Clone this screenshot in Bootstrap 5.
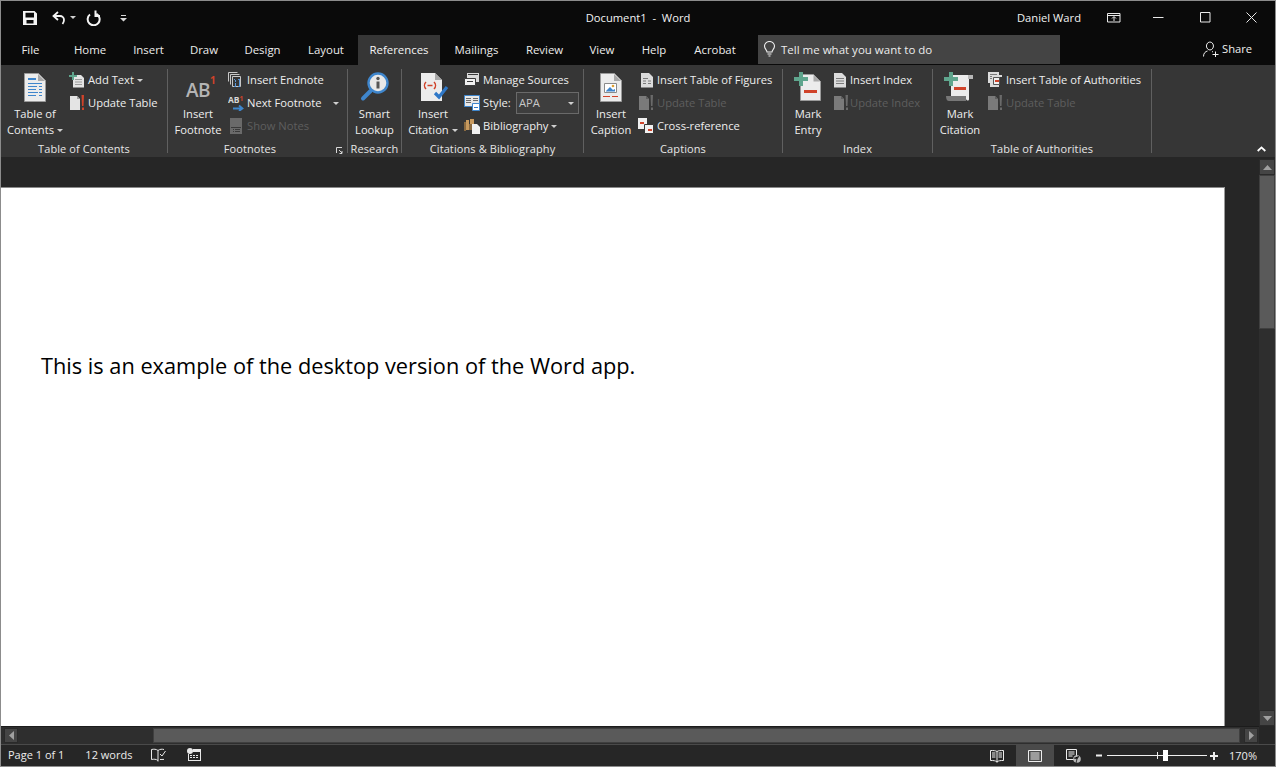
<!DOCTYPE html>
<html lang="en">
<head>
<meta charset="utf-8">
<title>Document1 - Word</title>
<link href="https://cdn.jsdelivr.net/npm/bootstrap@5.3.0/dist/css/bootstrap.min.css" rel="stylesheet">
<style>
html,body{height:100%;margin:0;background:#262626;overflow:hidden}
body{font-family:"Open Sans","Noto Sans",sans-serif;font-size:11.2px;line-height:16px;color:#f0f0f0}
svg{display:block;flex:none}
.win{width:1276px;height:767px;border:1px solid #8c8c8c}
.titlebar{height:34px;background:#0a0a0a;color:#f2f2f2}
.tb-side{flex:1 1 0}
.m-save{margin-left:21px}.m-undo{margin-left:13px}.m-caret{margin-left:5px;vertical-align:0}.m-redo{margin-left:10px}.m-cust{margin-left:18px}
.m-disp{margin-left:26px}.m-min{margin-left:32px}.m-max{margin-left:36px}.m-close{margin-left:35px;margin-right:18px}
.tabs{height:30px;background:#0a0a0a}
.tab{height:30px;text-align:center;line-height:29px;color:#ececec;font-size:11.4px}
.tab.active{background:#363636;color:#f4f4f4}
.t-file{width:59px}.t-home{width:60px}.t-insert{width:57px}.t-draw{width:54px}.t-design{width:63px}.t-layout{width:64px}.t-ref{width:82px}.t-mail{width:73px}.t-review{width:63px}.t-view{width:52px}.t-help{width:52px}.t-acro{width:70px}
.search{width:302px;height:29px;margin-left:8px;background:#444;color:#ececec;padding-left:5px;gap:5px;font-size:11.5px}
.search span{padding-top:1px}
.share{margin-left:143px;gap:3px;height:29px}
.ribbon{height:93px;background:#363636;padding-top:4px;position:relative}
.rg{height:84px;border-right:1px solid #606060;display:flex;flex-direction:column}
.rg-1{width:167px}.rg-2{width:180px}.rg-3{width:54px}.rg-4{width:182px}.rg-5{width:199px}.rg-6{width:150px}.rg-7{width:219px}
.rb{height:73px;flex:none;display:flex}
.rl{height:14px;text-align:center;font-size:11px;line-height:14px;color:#e6e6e6;position:relative;letter-spacing:.1px}
.rl-foot{padding-right:15px}
.launch{position:absolute;right:4px;top:5px}
.big{display:flex;flex-direction:column;align-items:center;text-align:center;line-height:16px;white-space:nowrap;color:#eee}
.big .ic{height:33px;display:flex;align-items:flex-end}
.big .tx{margin-top:4px}
.sm{display:flex;flex-direction:column}
.si{height:23px;display:flex;align-items:center;white-space:nowrap;color:#eee}
.si .lb{margin-left:3px}
.si .lb-add{margin-left:2px}
.si .lb-1{margin-left:1px}
.ml-2px{margin-left:2px}
.off{color:#5e5e5e}
.si.off{color:#5e5e5e}
.caret-d{display:inline-block;width:0;height:0;border-left:3px solid transparent;border-right:3px solid transparent;border-top:3px solid #d0d0d0;vertical-align:2px;margin-left:3px}
.caret-far{margin-left:11px}
.combo{width:63px;height:22px;border:1px solid #6a6a6a;background:#3e3e3e;color:#c8c8c8;padding-left:2px;padding-right:4px;display:flex;align-items:center;justify-content:space-between}
.lb-style{width:33px}
.collapse-btn{position:absolute;right:9px;bottom:5px}
.bw-68{width:68px}.bw-60{width:60px}.bw-53{width:53px}.bw-62{width:62px}.bw-54{width:54px}.bw-50{width:50px}
.main{height:569px}
.left{width:1258px}
.band{height:30px;background:#262626}
.page{width:1223px;height:539px;background:#fff;border-top:1px solid #8a8a8a;color:#000;font-family:"Open Sans",sans-serif;font-size:21.75px;line-height:28px;padding:164px 0 0 40px;box-shadow:1px 0 0 #9a9a9a}
.vbar{width:16px;margin-top:2px;background:#2e2e2e}
.sbtn{background:#454545;border:1px solid #2a2a2a;display:flex;align-items:center;justify-content:center}
.vbar .sbtn{height:16px}
.vth{height:154px;background:#5a5a5a;border:1px solid #3f3f3f}
.vgap{flex:1}
.hbar{height:18px;background:#2e2e2e;width:1258px;border-top:1px solid #1c1c1c;padding:1px 0 1px 3px}
.hbar .sbtn{width:14px}
.hgap{width:135px}
.hth{width:1087px;background:#5a5a5a;border:1px solid #3f3f3f}
.status{height:22px;background:#262626;border-top:1px solid #4a4a4a;color:#ececec;font-size:11px;line-height:18px}
.s-page{margin-left:7px;padding-bottom:1px}.s-words{margin-left:21px;padding-bottom:2px}.s-i1{margin-left:19px;margin-bottom:1px}.s-i2{margin-left:21px;margin-bottom:1px}
.rv{width:38px;height:21px;display:flex;align-items:center;justify-content:center}
.rv.on{background:#4a4a4a}
.z-minus{margin-left:4px}
.zoomtrack{width:100px;height:1px;background:#f0f0f0;position:relative;margin:0 3px 0 4px}
.zoomtrack i{position:absolute;left:50px;top:-3px;width:1px;height:7px;background:#f0f0f0}
.zoomtrack b{position:absolute;left:56px;top:-5px;width:5px;height:11px;background:#fff}
.z-pct{margin:0 18px 0 11px}
.defs{position:absolute;width:0;height:0}
</style>
</head>
<body>
<div class="win d-flex flex-column">
  <div class="titlebar d-flex align-items-center">
    <div class="tb-side d-flex align-items-center">
      <svg class="m-save" width="16" height="16" viewBox="0 0 16 16"><path fill="#f4f4f4" fill-rule="evenodd" d="M1 1h11.500L15 3.500V15H1zM3.500 2.800v4.700H12V2.800zM4.500 10v3.500h7V10z"/></svg>
      <svg class="m-undo" width="16" height="16" viewBox="0 0 16 16"><path fill="none" stroke="#f4f4f4" stroke-width="1.800" d="M7 2 2.500 6 7 10M3 6h6a4 4 0 0 1 4 4c0 1.700-.7 3-1.500 4"/></svg>
      <span class="caret-d m-caret"></span>
      <svg class="m-redo" width="16" height="16" viewBox="0 0 16 16"><path fill="none" stroke="#f4f4f4" stroke-width="2" d="M10.500 4a6 6 0 1 1-6.500.5M9.500 .5V6H14"/></svg>
      <svg class="m-cust" width="7" height="8" viewBox="0 0 7 8"><path fill="#d8d8d8" d="M1 1h5v1H1zM0 4h7L3.500 7.500z"/></svg>
    </div>
    <div class="text-center">Document1 &nbsp;-&nbsp; Word</div>
    <div class="tb-side d-flex align-items-center justify-content-end">
      <span>Daniel Ward</span>
      <svg class="m-disp" width="14" height="10" viewBox="0 0 14 10"><path fill="none" stroke="#e8e8e8" d="M.5.500h12.500v8.500H.5zM.5 2.500h12.500M7 8V4M5 5.500l2-2 2 2"/></svg>
      <svg class="m-min" width="11" height="11" viewBox="0 0 11 11"><path stroke="#e8e8e8" d="M0 5.500h10.500"/></svg>
      <svg class="m-max" width="11" height="11" viewBox="0 0 11 11"><path fill="none" stroke="#e8e8e8" d="M.5.500h9.500v9.500H.5z"/></svg>
      <svg class="m-close" width="11" height="11" viewBox="0 0 11 11"><path stroke="#e8e8e8" d="M.5.500l10 10M10.500.500l-10 10"/></svg>
    </div>
  </div>
  <nav class="tabs d-flex align-items-start">
    <div class="tab t-file">File</div>
    <div class="tab t-home">Home</div>
    <div class="tab t-insert">Insert</div>
    <div class="tab t-draw">Draw</div>
    <div class="tab t-design">Design</div>
    <div class="tab t-layout">Layout</div>
    <div class="tab t-ref active">References</div>
    <div class="tab t-mail">Mailings</div>
    <div class="tab t-review">Review</div>
    <div class="tab t-view">View</div>
    <div class="tab t-help">Help</div>
    <div class="tab t-acro">Acrobat</div>
    <div class="search d-flex align-items-center">
      <svg width="13" height="16" viewBox="0 0 13 16"><path fill="none" stroke="#eee" stroke-width="1.100" d="M4 11c0-2-2.500-3-2.500-6a5 4.500 0 0 1 10 0c0 3-2.500 4-2.500 6zM4.500 13h4M5.500 15h2"/></svg>
      <span>Tell me what you want to do</span>
    </div>
    <div class="share d-flex align-items-center">
      <svg width="16" height="16" viewBox="0 0 16 16"><path fill="none" stroke="#eee" d="M7 1a3.500 4 0 1 1-.1 0M.5 15.500c0-3.500 2-5 4-5.500M9 10.500l1 .5M9.500 13.500h6M12.500 10.500v5.500"/></svg>
      <span>Share</span>
    </div>
  </nav>
  <div class="ribbon d-flex">
    <section class="rg rg-1">
      <div class="rb">
        <div class="big bw-68">
          <div class="ic"><svg width="22" height="29" viewBox="0 0 22 29"><path fill="#ececec" stroke="#9a9a9a" d="M.5.500h14l7 7v21H.5z"/><path fill="#a8a8a8" d="M14 1l7 7h-7z"/><path fill="#3f86cc" d="M4 5h8v2H4zM4 10h14v1H4zM4 13h9v1H4zM15 13h3v1h-3zM4 16h8v1H4zM15 16h3v1h-3zM4 19h10v1H4zM15 19h3v1h-3zM4 22h8v1H4zM15 22h3v1h-3z"/></svg></div>
          <div class="tx">Table of<br>Contents<span class="caret-d"></span></div>
        </div>
        <div class="sm">
          <div class="si"><svg width="17" height="16" viewBox="0 0 17 16"><path fill="#e4e4e4" d="M4 3h8l3 3v9.500H4z"/><path fill="#9a9a9a" d="M6 7h7v1H6zM6 9.500h7v1H6zM6 12h7v1H6z"/><path fill="#5fa58d" d="M3 0h2v3h3v2H5v3H3V5H0V3h3z"/></svg><span class="lb lb-add">Add Text<span class="caret-d"></span></span></div>
          <div class="si"><svg width="16" height="16" viewBox="0 0 16 16"><use href="#pg"/><path fill="#d0432a" d="M12.500 0h2.500l-.5 11h-1.500zM13 12.500h2V15h-2z"/></svg><span class="lb">Update Table</span></div>
        </div>
      </div>
      <div class="rl">Table of Contents</div>
    </section>
    <section class="rg rg-2">
      <div class="rb">
        <div class="big bw-60">
          <div class="ic"><svg width="38" height="28" viewBox="0 0 38 28"><text x="7" y="23" font-family="Open Sans,sans-serif" font-size="19" font-weight="600" letter-spacing="-.5" fill="#b4b4b4">AB<tspan dy="-13" font-size="10" font-weight="700" fill="#d0432a">1</tspan></text></svg></div>
          <div class="tx">Insert<br>Footnote</div>
        </div>
        <div class="sm">
          <div class="si"><svg width="16" height="16" viewBox="0 0 16 16"><path fill="none" stroke="#c8c8c8" d="M.5.500h9M.5.500v9M2.500 2.500h9M2.500 2.500v10M4.500 4.500h8v10h-8z"/><path fill="#5a98d8" d="M7 8h1v2H7zM7 11h1v3H7zM10 7h1v1h-1zM11 7h1v8h-2v-1h1zM6 7h1v1H6zM6 14h2v1H6z"/></svg><span class="lb">Insert Endnote</span></div>
          <div class="si"><svg width="16" height="16" viewBox="0 0 16 16"><text x="0" y="8" font-family="Open Sans,sans-serif" font-size="8.500" font-weight="700" fill="#d8d8d8">AB<tspan dy="-2" font-size="6.500" fill="#d0432a">1</tspan></text><path fill="none" stroke="#3f86cc" stroke-width="1.800" d="M5 13.500h9M11 10.500l3.500 3-3.500 2.500"/></svg><span class="lb">Next Footnote</span><span class="caret-d caret-far"></span></div>
          <div class="si off"><svg width="16" height="16" viewBox="0 0 16 16"><path fill="#6a6a6a" d="M2 0h12v16H2z"/><path fill="#3a3a3a" d="M3 9h10v1H3zM5 11h1v1H5zM7 11h5v1H7zM5 13h1v1H5zM7 13h5v1H7z"/></svg><span class="lb">Show Notes</span></div>
        </div>
      </div>
      <div class="rl"><div class="rl-foot">Footnotes</div>
        <svg class="launch" width="7" height="7" viewBox="0 0 7 7"><path fill="none" stroke="#d8d8d8" d="M.5 6V.5H6M3 3l3 3M6 4v2.500H3.500"/></svg>
      </div>
    </section>
    <section class="rg rg-3">
      <div class="rb">
        <div class="big bw-53">
          <div class="ic"><svg width="30" height="30" viewBox="0 0 30 30"><circle cx="18" cy="11" r="9.500" fill="#e8e8e8" stroke="#3f86cc" stroke-width="2.400"/><path fill="#555" d="M16.500 9.500h3v7h-3z"/><circle cx="18" cy="6.500" r="1.700" fill="#555"/><path stroke="#3f86cc" stroke-width="4" stroke-linecap="round" d="M10.500 19 3 26.500"/></svg></div>
          <div class="tx">Smart<br>Lookup</div>
        </div>
      </div>
      <div class="rl">Research</div>
    </section>
    <section class="rg rg-4">
      <div class="rb">
        <div class="big bw-62">
          <div class="ic"><svg width="32" height="30" viewBox="0 0 32 30"><path fill="#ececec" d="M4 1h14l7 7v21H4z"/><path fill="#a8a8a8" d="M18 1l7 7h-7z"/><path fill="none" stroke="#d0432a" stroke-width="1.500" d="M9 10c-2 2-2 5 0 7M17 10c2 2 2 5 0 7M10.500 13.500h5"/><path fill="none" stroke="#2f78c8" stroke-width="3.200" d="M18 21l4 4 8-10"/></svg></div>
          <div class="tx">Insert<br>Citation<span class="caret-d"></span></div>
        </div>
        <div class="sm">
          <div class="si"><svg width="16" height="16" viewBox="0 0 16 16"><path fill="#d8d8d8" d="M3 1h12v9H3z"/><path fill="#3a3a3a" d="M4 2h10v1H4zM2 3h1v2H2z"/><path fill="#f0f0f0" stroke="#3a3a3a" d="M.5 6.500h11v7H.5z"/><path fill="#3a3a3a" d="M3 9h6v1H3z"/></svg><span class="lb">Manage Sources</span></div>
          <div class="si"><svg width="16" height="16" viewBox="0 0 16 16"><path fill="#e8e8e8" stroke="#3f86cc" d="M.5.500h15v11H.5z"/><path fill="#6a6a6a" d="M2 3h5v1H2zM2 5h5v1H2zM2 7h5v1H2zM9 3h5v1H9zM9 5h5v1H9z"/><path fill="#fff" stroke="#3f86cc" d="M8.500 8.500h7v7h-7z"/><path fill="#2f78c8" d="M10 12h4v1h-4z"/></svg><span class="lb lb-style">Style:</span>
            <div class="combo"><span>APA</span><span class="caret-d"></span></div>
          </div>
          <div class="si"><svg width="16" height="16" viewBox="0 0 16 16"><path fill="#c89a5e" d="M2 2h3v10H2zM6 1h4v5H6z"/><path fill="#8a6a40" d="M0 4h2v9H0zM5 6h3v6H5z"/><path fill="#f0f0f0" d="M8 6h5l3 3v7H8z"/></svg><span class="lb">Bibliography<span class="caret-d"></span></span></div>
        </div>
      </div>
      <div class="rl">Citations &amp; Bibliography</div>
    </section>
    <section class="rg rg-5">
      <div class="rb">
        <div class="big bw-54">
          <div class="ic"><svg width="22" height="29" viewBox="0 0 22 29"><path fill="#ececec" stroke="#9a9a9a" d="M.5.500h14l7 7v21H.5z"/><path fill="#a8a8a8" d="M14 1l7 7h-7z"/><path fill="#fff" stroke="#8a8a8a" d="M4.500 10.500h12v9h-12z"/><path fill="#3f86cc" d="M6 18l4-4 3 3 2-1v2.500H6z"/><circle cx="13" cy="13" r="1.300" fill="#e0a030"/><path fill="#d0432a" d="M3 23h7v1H3zM12 23h6v1h-6z"/></svg></div>
          <div class="tx">Insert<br>Caption</div>
        </div>
        <div class="sm">
          <div class="si"><svg class="ml-2px" width="14" height="16" viewBox="0 0 14 16"><path fill="#dcdcdc" d="M1 1h8l4 4v10.500H1z"/><path fill="#7a7a7a" d="M3 6h5v1H3zM3 8.500h3v1H3zM8 8.500h3v1H8zM3 11h3v1H3zM8 11h3v1H8z"/></svg><span class="lb">Insert Table of Figures</span></div>
          <div class="si off"><svg width="16" height="16" viewBox="0 0 16 16"><use href="#pgoff"/><path fill="#6a6a6a" d="M12.500 0h2.500l-.5 11h-1.500zM13 12.500h2V15h-2z"/></svg><span class="lb">Update Table</span></div>
          <div class="si"><svg width="16" height="16" viewBox="0 0 16 16"><path fill="#f0f0f0" d="M0 0h9v11H0z"/><path fill="#d0432a" d="M2 4h4v2H2z"/><path fill="#f0f0f0" stroke="#363636" d="M6.500 6.500h9v9h-9z"/><path fill="#d0432a" d="M10 11h4v2h-4z"/></svg><span class="lb">Cross-reference</span></div>
        </div>
      </div>
      <div class="rl">Captions</div>
    </section>
    <section class="rg rg-6">
      <div class="rb">
        <div class="big bw-50">
          <div class="ic"><svg width="28" height="30" viewBox="0 0 28 30"><path fill="#ececec" stroke="#9a9a9a" d="M6.500 2.500h13l7 7v19h-20z"/><path fill="#a8a8a8" d="M19.500 3l6.500 6.500h-6.500z"/><path fill="#5fa58d" d="M5 0h4v5h5v4H9v5H5V9H0V5h5z"/><path fill="#d0432a" d="M10 18h13v3H10z"/></svg></div>
          <div class="tx">Mark<br>Entry</div>
        </div>
        <div class="sm">
          <div class="si"><svg width="14" height="16" viewBox="0 0 14 16"><path fill="#dcdcdc" d="M1 1h8l4 4v10.500H1z"/><path fill="#7a7a7a" d="M3 6h8v1H3zM3 8.500h8v1H3zM3 11h8v1H3z"/></svg><span class="lb">Insert Index</span></div>
          <div class="si off"><svg width="16" height="16" viewBox="0 0 16 16"><use href="#pgoff"/><path fill="#6a6a6a" d="M12.500 0h2.500l-.5 11h-1.500zM13 12.500h2V15h-2z"/></svg><span class="lb lb-1">Update Index</span></div>
        </div>
      </div>
      <div class="rl">Index</div>
    </section>
    <section class="rg rg-7">
      <div class="rb">
        <div class="big bw-54">
          <div class="ic"><svg width="32" height="30" viewBox="0 0 32 30"><path fill="#777" d="M2 24h20v5H5c-2 0-3-2-3-5z"/><path fill="#ececec" d="M7 3h22v4h-4v20c0 2-2 2-3 0v-3H7z"/><path fill="#b8b8b8" d="M24 3h5v4h-5z"/><path fill="#5fa58d" d="M5 0h4v5h5v4H9v5H5V9H0V5h5z"/><path fill="#d0432a" d="M10 15h12v3H10z"/></svg></div>
          <div class="tx">Mark<br>Citation</div>
        </div>
        <div class="sm">
          <div class="si"><svg width="16" height="16" viewBox="0 0 16 16"><path fill="#dcdcdc" d="M1 0h11v3h3v2h-3v10H3v-4H1z"/><path fill="#7a7a7a" d="M3 2h7v1H3zM3 4h2v1H3zM3 6h2v1H3z"/><path fill="#f0f0f0" stroke="#555" d="M6.500 5.500h6v7h-6z"/><path fill="#d0432a" d="M8 8h4v2H8z"/></svg><span class="lb">Insert Table of Authorities</span></div>
          <div class="si off"><svg width="16" height="16" viewBox="0 0 16 16"><use href="#pgoff"/><path fill="#6a6a6a" d="M12.500 0h2.500l-.5 11h-1.500zM13 12.500h2V15h-2z"/></svg><span class="lb">Update Table</span></div>
        </div>
      </div>
      <div class="rl">Table of Authorities</div>
    </section>
    <svg class="collapse-btn" width="9" height="6" viewBox="0 0 9 6"><path fill="none" stroke="#fff" stroke-width="1.800" d="M.7 5 4.500 1.400 8.300 5"/></svg>
  </div>
  <div class="main d-flex">
    <div class="left">
      <div class="band"></div>
      <div class="page">This is an example of the desktop version of the Word app.</div>
    </div>
    <div class="vbar d-flex flex-column">
      <div class="sbtn"><svg width="9" height="5" viewBox="0 0 9 5"><path fill="#a0a0a0" d="M4.500 0 9 5H0z"/></svg></div>
      <div class="vth"></div>
      <div class="vgap"></div>
      <div class="sbtn"><svg width="9" height="5" viewBox="0 0 9 5"><path fill="#a0a0a0" d="M0 0h9L4.500 5z"/></svg></div>
    </div>
  </div>
  <div class="hbar d-flex">
    <div class="sbtn"><svg width="5" height="9" viewBox="0 0 5 9"><path fill="#a0a0a0" d="M5 0v9L0 4.500z"/></svg></div>
    <div class="hgap"></div>
    <div class="hth"></div>
    <div class="sbtn ms-1"><svg width="5" height="9" viewBox="0 0 5 9"><path fill="#a0a0a0" d="M0 0l5 4.500L0 9z"/></svg></div>
  </div>
  <footer class="status d-flex align-items-center">
    <span class="s-page">Page 1 of 1</span>
    <span class="s-words">12 words</span>
    <svg class="s-i1" width="15" height="14" viewBox="0 0 15 14"><path fill="none" stroke="#e8e8e8" d="M7 2.500C5 1 3 1 .5 1.500v10c2.500-.5 4.500-.5 6.500 1M7 2.500c2-1.500 4-1.500 6-1M7 2.500v11M9 11.500l4-.1M9 6l2 2 3.500-5"/></svg>
    <svg class="s-i2" width="14" height="14" viewBox="0 0 14 14"><circle cx="3" cy="3" r="3" fill="#e8e8e8"/><path fill="#e8e8e8" d="M6 1h8v12H1V6h1v6h11V4H6z"/><path fill="#e8e8e8" d="M3 7h2v1H3zM6 7h2v1H6zM9 7h2v1H9zM3 9h2v1H3zM6 9h2v1H6zM9 9h2v1H9z"/></svg>
    <div class="ms-auto d-flex align-items-center">
      <div class="rv"><svg width="14" height="14" viewBox="0 0 14 14"><path fill="none" stroke="#eee" d="M.5 1.500c3 0 5 0 6.500 1 1.500-1 3.500-1 6.500-1v10c-3 0-5 0-6.500 1.500-1.500-1.500-3.500-1.500-6.500-1.500zM7 2.500v11M2 4h3.500M2 6h3.500M2 8h3.500M8.500 4H12M8.500 6H12M8.500 8H12"/></svg></div>
      <div class="rv on"><svg width="14" height="12" viewBox="0 0 14 12"><path fill="none" stroke="#eee" d="M.5.500h13v11H.5zM2.500 3h9M2.500 5h9M2.500 7h9M2.500 9h9"/></svg></div>
      <div class="rv"><svg width="15" height="14" viewBox="0 0 15 14"><path fill="none" stroke="#eee" d="M.5.500h10v10H.5zM2.500 3h6M2.500 5h6M2.500 7h4"/><circle cx="11" cy="10" r="3.800" fill="#b8b8b8"/><path stroke="#333" d="M8 9l3 1 2-3M10 14l1-4"/></svg></div>
      <svg class="z-minus" width="7" height="7" viewBox="0 0 7 7"><path fill="#eee" d="M0 2.500h6v2H0z"/></svg>
      <div class="zoomtrack"><i></i><b></b></div>
      <svg width="8" height="8" viewBox="0 0 8 8"><path fill="#eee" d="M3 0h2v3h3v2H5v3H3V5H0V3h3z"/></svg>
      <span class="z-pct">170%</span>
    </div>
  </footer>
</div>
<svg class="defs"><defs>
  <symbol id="pg" viewBox="0 0 16 16"><path fill="#e4e4e4" d="M1 1h7l3 3v11H1z"/><path fill="#a0a0a0" d="M8 1l3 3H8z"/></symbol>
  <symbol id="pgoff" viewBox="0 0 16 16"><path fill="#7a7a7a" d="M1 1h7l3 3v11H1z"/><path fill="#5e5e5e" d="M8 1l3 3H8z"/></symbol>
</defs></svg>
<script src="https://cdn.jsdelivr.net/npm/bootstrap@5.3.0/dist/js/bootstrap.bundle.min.js"></script>
</body>
</html>
